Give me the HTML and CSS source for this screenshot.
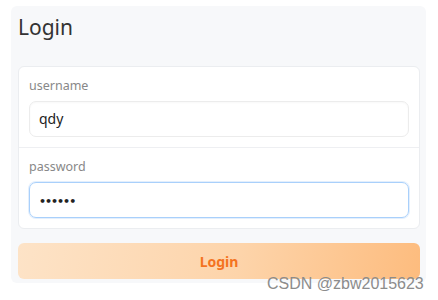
FILE: index.html
```html
<!DOCTYPE html>
<html lang="en">
<head>
  <meta charset="UTF-8" />
  <title>Login</title>
  <link rel="stylesheet" href="styles.css">
</head>
<body>
  <div class="panel">
    <h1 class="title">Login</h1>
    <div class="card">
      <div class="row">
        <label class="label">username</label>
        <div class="input">qdy</div>
      </div>
      <div class="row">
        <label class="label">password</label>
        <div class="input focus"><span class="dots">••••••</span></div>
      </div>
    </div>
    <button class="btn">Login</button>
  </div>
  <div class="mark">CSDN @zbw2015623</div>
</body>
</html>
```
FILE: styles.css
```css
body { margin: 0; background: #fff; font-family: 'Noto Sans', 'Open Sans', sans-serif; color: #222; }
.panel { margin: 6px 12px 0 11px; height: 277px; box-sizing: border-box; padding: 6px 6px 0 7px; background: #f7f8fa; border-radius: 6px; }
.title { margin: 0; font-size: 21px; font-weight: 400; line-height: 30px; color: #333; }
.card { margin-top: 24px; background: #fff; border: 1px solid #ebedf0; border-radius: 6px; }
.row { padding: 9px 10px 10px 10px; display: flex; flex-direction: column; gap: 5px; }
.row + .row { border-top: 1px solid #eeeff2; }
.label { font-size: 12.5px; line-height: 20px; color: #888; }
.input { height: 36px; box-sizing: border-box; padding: 0 9px; border: 1px solid #ececec; border-radius: 7px; font-size: 14px; line-height: 34px; color: #222; box-shadow: inset 0 1px 2px rgba(0,0,0,0.03); }
.input.focus { border-color: #a9d0fb; box-shadow: 0 0 0 1px #e3effd; }
.dots { font-family: 'DejaVu Sans', sans-serif; font-size: 11px; font-weight: 700; letter-spacing: -1px; }
.btn { display: block; width: 100%; height: 36px; margin-top: 14px; border: 0; border-radius: 6px; background: linear-gradient(100deg, #fde3c7 0%, #fdd4aa 55%, #fdbc7e 100%); color: #f4731f; font-family: inherit; font-size: 14px; font-weight: 700; }
.mark { position: absolute; left: 267px; top: 275px; font-family: 'Liberation Sans', Arial, sans-serif; font-size: 16px; color: #8c8c8c; }
```
